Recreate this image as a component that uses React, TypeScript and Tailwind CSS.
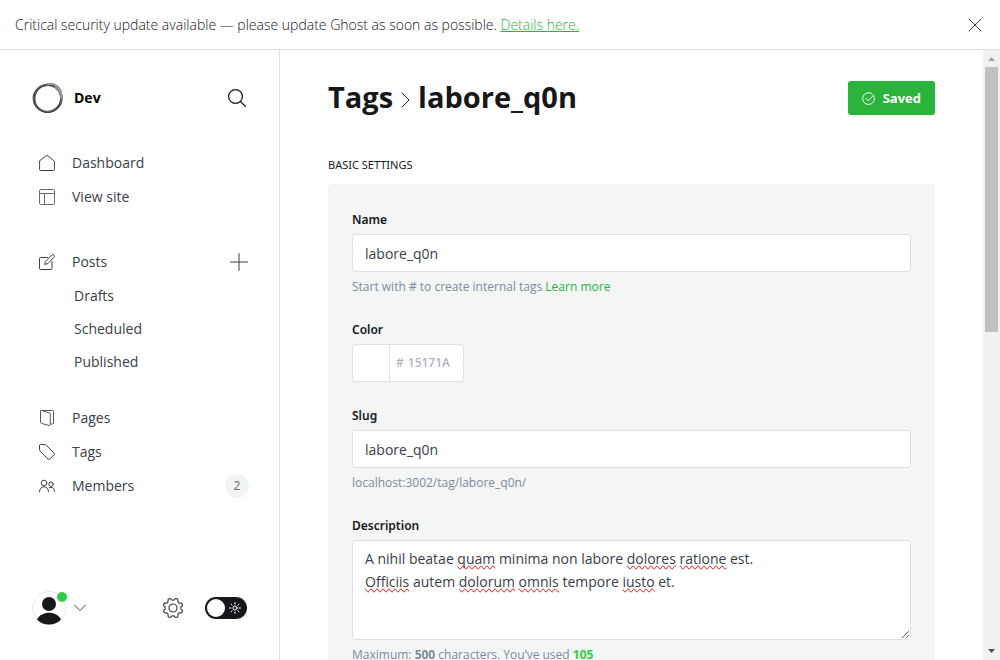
import { useState, type ReactNode } from 'react';

const line = {
  fill: 'none',
  stroke: 'currentColor',
  strokeLinecap: 'round' as const,
  strokeLinejoin: 'round' as const,
  'aria-hidden': true,
};

function LogoIcon() {
  return (
    <svg viewBox="0 0 32 32" className="size-8 shrink-0" fill="none" aria-hidden="true">
      <ellipse cx="15.600" cy="16.400" rx="14" ry="13.400" stroke="#444" strokeWidth="2" />
      <ellipse cx="16.200" cy="16" rx="13.400" ry="14" stroke="#555" strokeWidth="1.500" transform="rotate(30 16 16)" />
      <ellipse cx="16" cy="15.800" rx="14.800" ry="13" stroke="#777" strokeWidth="1.100" transform="rotate(-42 16 16)" />
      <ellipse cx="15.800" cy="16.800" rx="13" ry="13.600" stroke="#444" strokeWidth="1.200" transform="rotate(18 16 16)" />
      <path d="M15 2.400c5-1.600 11 .6 13.200 5.600M23 4.200c4.200 2.600 6.800 7.200 6.400 12.800" stroke="#999" strokeWidth="2.200" />
    </svg>
  );
}

function SearchIcon() {
  return (
    <svg viewBox="0 0 20 20" className="size-5" {...line} strokeWidth="1.3">
      <circle cx="8.500" cy="8.500" r="6.900" />
      <path d="M13.500 13.500 18.600 18.600" />
    </svg>
  );
}

function HomeIcon() {
  return (
    <svg viewBox="0 0 16 16" className="size-4" {...line}>
      <path d="M.6 6.200v8.300a1 1 0 0 0 1 1h12.800a1 1 0 0 0 1-1V6.200L9 .9a1.600 1.600 0 0 0-2 0z" />
    </svg>
  );
}

function LayoutIcon() {
  return (
    <svg viewBox="0 0 16 16" className="size-4 text-[#626d79]" {...line}>
      <rect x=".5" y=".5" width="15" height="15" rx="1.200" />
      <path d="M.5 4.500h15M5.500 4.500v11" />
    </svg>
  );
}

function PostsIcon() {
  return (
    <svg viewBox="0 0 16 16" className="size-4" {...line}>
      <path d="M8.500 3.500H1.500a1 1 0 0 0-1 1v10a1 1 0 0 0 1 1h10.500a1 1 0 0 0 1-1V7.500" />
      <path d="m8.600 9.700-2.900.7.700-2.900L12.900.9a1.400 1.400 0 0 1 2 0l.2.200a1.400 1.400 0 0 1 0 2z" />
    </svg>
  );
}

function PagesIcon() {
  return (
    <svg viewBox="0 0 16 16" className="size-4 text-[#4f5a65]" {...line}>
      <path d="M2.500.5h11a1 1 0 0 1 1 1v11.500a1 1 0 0 1-1 1h-2" />
      <path d="M1.500 1.200v11.200a1 1 0 0 0 .7.900l7.400 2.100a1.200 1.200 0 0 0 1.700-1V4a1 1 0 0 0-.7-1L2.500.5a.8.8 0 0 0-1 .7z" />
    </svg>
  );
}

function TagIcon() {
  return (
    <svg viewBox="0 0 16 16" className="size-4" {...line}>
      <path d="M.5 1.500v4.200a2 2 0 0 0 .6 1.400l8 8a1.200 1.200 0 0 0 1.700 0l4.300-4.300a1.200 1.200 0 0 0 0-1.700l-8-8A2 2 0 0 0 5.700.5H1.500a1 1 0 0 0-1 1z" />
    </svg>
  );
}

function MembersIcon() {
  return (
    <svg viewBox="0 0 16 16" className="size-4" {...line}>
      <circle cx="5" cy="5" r="2.800" />
      <path d="M.5 13.800c0-3.200 2-5 4.500-5s4.500 1.800 4.500 5" />
      <circle cx="12" cy="6.200" r="2.200" />
      <path d="M10.300 9.700c.5-.3 1.100-.4 1.700-.4 2 0 3.500 1.600 3.500 4.200" />
    </svg>
  );
}

// Outline of an eight-toothed cog, with a valley on each axis.
const gearPath =
  Array.from({ length: 144 }, (_, i) => {
    const angle = (i / 144) * Math.PI * 2;
    const radius = 8.9 - 1.2 * Math.tanh(1.6 * Math.cos(8 * angle));
    const x = (11 + radius * Math.cos(angle)).toFixed(2);
    const y = (11 + radius * Math.sin(angle)).toFixed(2);
    return `${i ? 'L' : 'M'}${x} ${y}`;
  }).join('') + 'Z';

function GearIcon() {
  return (
    <svg viewBox="0 0 22 22" className="size-[22px]" {...line} strokeWidth="1.200">
      <circle cx="11" cy="11" r="4" />
      <path d={gearPath} />
    </svg>
  );
}

function AvatarIcon() {
  return (
    <svg viewBox="0 0 34 34" className="size-[34px]" aria-hidden="true">
      <circle cx="17" cy="17" r="16.500" fill="#fff" stroke="#e5e9ed" />
      <circle cx="17" cy="13" r="7" fill="#15171a" />
      <path d="M5 28.400c2.500-4.300 7-6.600 12-6.600s9.500 2.300 12 6.600c-3 3.300-7.200 5.100-12 5.100s-9-1.800-12-5.100z" fill="#15171a" />
    </svg>
  );
}

function SunIcon() {
  return (
    <svg viewBox="0 0 12 12" className="size-3 text-white" {...line} strokeWidth="1">
      <circle cx="6" cy="6" r="2" />
      <path d="M6 .5v1.600M6 9.900v1.600M.5 6h1.600M9.900 6h1.600M2.100 2.100l1.100 1.100M8.800 8.800l1.100 1.100M2.100 9.900l1.100-1.100M8.800 3.200l1.100-1.100" />
    </svg>
  );
}

function NavItem({ icon, label, children }: { icon: ReactNode; label: string; children?: ReactNode }) {
  return (
    <li className="flex h-[34px] items-center">
      <a href="#" className="flex flex-1 items-center gap-[17px] text-[#394047]">
        {icon}
        <span className="pb-[2px]">{label}</span>
      </a>
      {children}
    </li>
  );
}

function Sidebar() {
  const [night, setNight] = useState(false);
  return (
    <aside className="flex w-[280px] shrink-0 flex-col border-r border-[#dddfe1] pt-8 pr-[30px] pb-[35px] pl-8 text-[14px]">
      <div className="flex h-8 items-center justify-between pr-[2px]">
        <a href="#" className="flex items-center gap-[10px] font-bold text-black">
          <LogoIcon />
          <span className="pb-[2px]">Dev</span>
        </a>
        <button type="button" aria-label="Search" className="text-[#15171a]">
          <SearchIcon />
        </button>
      </div>
      <nav className="mt-8 flex flex-col pl-[7px]">
        <ul>
          <NavItem icon={<HomeIcon />} label="Dashboard" />
          <NavItem icon={<LayoutIcon />} label="View site" />
        </ul>
        <ul className="mt-[31px]">
          <NavItem icon={<PostsIcon />} label="Posts">
            <button type="button" aria-label="New post" className="pr-px text-[#394047]">
              <svg viewBox="0 0 18 18" className="size-[18px]" {...line}>
                <path d="M9 .5v17M.5 9h17" />
              </svg>
            </button>
          </NavItem>
          {['Drafts', 'Scheduled', 'Published'].map((label) => (
            <li key={label} className="flex h-[33px] items-center">
              <a href="#" className="pl-[35px] text-[#394047]">
                {label}
              </a>
            </li>
          ))}
        </ul>
        <ul className="mt-[23px]">
          <NavItem icon={<PagesIcon />} label="Pages" />
          <NavItem icon={<TagIcon />} label="Tags" />
          <NavItem icon={<MembersIcon />} label="Members">
            <span className="flex size-6 items-center justify-center rounded-full bg-[#f1f3f4] text-xs font-medium text-[#626d79]">
              2
            </span>
          </NavItem>
        </ul>
      </nav>
      <div className="mt-auto flex items-center pr-[2px]">
        <button type="button" aria-label="Account menu" className="flex items-center gap-2 text-[#394047]">
          <span className="relative">
            <AvatarIcon />
            <span className="absolute top-px right-[-1px] size-[10px] rounded-full bg-[#30cf43]" />
          </span>
          <svg viewBox="0 0 12 8" className="h-2 w-3" {...line}>
            <path d="M.5 1 6 6.500 11.500 1" />
          </svg>
        </button>
        <a href="#" aria-label="Settings" className="ml-auto text-[#394047]">
          <GearIcon />
        </a>
        <button
          type="button"
          role="switch"
          aria-label="Night shift"
          aria-checked={night}
          onClick={() => setNight(!night)}
          className="ml-[21px] flex h-[22px] w-[42px] items-center justify-between rounded-full bg-[#15171a] pr-[6px] pl-[2px]"
        >
          <span className="size-[18px] rounded-full bg-white" />
          <SunIcon />
        </button>
      </div>
    </aside>
  );
}

const labelClass = "block h-[19px] font-['Noto_Sans',sans-serif] text-[12px] leading-[18px] font-semibold text-[#15171a]";
const boxClass = 'rounded-[3px] border border-[#dddfe1] bg-white';
const helpClass = 'mt-[5px] text-[12px] leading-5 text-[#7c8b9a]';

const description = [
  ['A', 'nihil', 'beatae', '*quam', 'minima', 'non', 'labore', '*dolores', '*ratione', 'est.'],
  ['*Officiis', 'autem', '*dolorum', '*omnis', 'tempore', '*iusto', 'et.'],
];
const descriptionText = description.map((row) => row.join(' ').replaceAll('*', '')).join('\n');

function Settings() {
  const [name, setName] = useState('labore_q0n');
  const [slug, setSlug] = useState('labore_q0n');
  const [text, setText] = useState(descriptionText);
  const textBox = 'col-start-1 row-start-1 h-[100px] w-full px-3 py-[6px] text-[14px] leading-[23px]';
  return (
    <form className="rounded-[3px] bg-[#f4f6f6] px-6 pt-[27px] pb-6">
      <label htmlFor="name" className={labelClass}>Name</label>
      <input
        id="name"
        value={name}
        onChange={(e) => setName(e.target.value)}
        className={`${boxClass} mt-1 block h-[38px] w-full px-3 text-[14px] text-[#394047]`}
      />
      <p className={helpClass}>
        Start with # to create internal tags <a href="#" className="text-[#2ab43b]">Learn more</a>
      </p>

      <label htmlFor="color" className={`${labelClass} mt-6`}>Color</label>
      <div className={`${boxClass} mt-1 flex h-[38px] w-28 items-center`}>
        <button type="button" aria-label="Pick a color" className="h-full w-[37px] shrink-0 border-r border-[#dddfe1]" />
        <label htmlFor="color" className="pl-[6px] text-[12px] font-semibold text-[#aeb7c1]">#</label>
        <input
          id="color"
          placeholder="15171A"
          className="w-full min-w-0 pl-1 text-[12px] font-semibold text-[#394047] placeholder:text-[#aeb7c1]"
        />
      </div>

      <label htmlFor="slug" className={`${labelClass} mt-[25px]`}>Slug</label>
      <input
        id="slug"
        value={slug}
        onChange={(e) => setSlug(e.target.value)}
        className={`${boxClass} mt-1 block h-[38px] w-full px-3 text-[14px] text-[#394047]`}
      />
      <p className={helpClass}>localhost:3002/tag/{slug}/</p>

      <label htmlFor="description" className={`${labelClass} mt-6`}>Description</label>
      <div className="mt-1 grid">
        <div aria-hidden="true" className={`${textBox} overflow-hidden rounded-[3px] border border-transparent bg-white text-transparent`}>
          {text === descriptionText &&
            description.map((row, i) => (
              <div key={i}>
                {row.map((word, j) => (
                  <span key={j}>
                    {j > 0 && ' '}
                    {word.startsWith('*') ? (
                      <span className="[text-decoration-line:spelling-error]">{word.slice(1)}</span>
                    ) : (
                      word
                    )}
                  </span>
                ))}
              </div>
            ))}
        </div>
        <textarea
          id="description"
          value={text}
          onChange={(e) => setText(e.target.value)}
          className={`${textBox} z-10 resize rounded-[3px] border border-[#dddfe1] bg-transparent text-[#394047]`}
        />
      </div>
      <p className={helpClass}>
        Maximum: <b>500</b> characters. You’ve used <b className="text-[#30cf43]">105</b>
      </p>
    </form>
  );
}

function ScrollRail() {
  return (
    <div aria-hidden="true" className="flex w-[17px] shrink-0 flex-col items-center bg-[#f1f1f1]">
      <svg viewBox="0 0 17 17" className="size-[17px] shrink-0">
        <path d="M5 11h7L8.500 7z" fill="#a3a3a3" />
      </svg>
      <div className="w-full flex-1 px-[2px]">
        <div className="h-[46%] bg-[#c1c1c1]" />
      </div>
      <svg viewBox="0 0 17 17" className="size-[17px] shrink-0">
        <path d="M5 6h7l-3.500 4z" fill="#505050" />
      </svg>
    </div>
  );
}

export default function App() {
  return (
    <div className="flex h-screen flex-col bg-white font-['Open_Sans','Noto_Sans',sans-serif] text-[#394047]">
      <header className="flex h-[50px] shrink-0 items-center justify-between border-b border-[#dddfe1] pr-[18px] pl-[15px] text-[14px]">
        <p className="pb-px font-light text-[#15171a]">
          Critical security update available — please update Ghost as soon as possible.{' '}
          <a href="#" className="text-[#2ab43b] underline">Details here.</a>
        </p>
        <button type="button" aria-label="Close" className="text-[#394047]">
          <svg viewBox="0 0 14 14" className="size-[14px]" {...line}>
            <path d="m1 1 12 12M13 1 1 13" />
          </svg>
        </button>
      </header>
      <div className="flex min-h-0 flex-1">
        <Sidebar />
        <main className="min-w-0 flex-1 overflow-y-auto px-12 pt-[31px] pb-12 [scrollbar-width:none]">
          <div className="flex h-[34px] items-center justify-between">
            <h1 className="flex items-center gap-2 pb-[2px] text-[29px] leading-8 font-bold text-[#15171a]">
              <a href="#">Tags</a>
              <svg viewBox="0 0 9 16" className="mt-[6px] h-4 w-[9px]" {...line}>
                <path d="m1 1 7 7-7 7" />
              </svg>
              <span>labore_q0n</span>
            </h1>
            <button
              type="button"
              className="flex h-[34px] items-center gap-2 rounded-[3px] bg-[#2ab43b] px-[14px] text-[13px] font-bold text-white"
            >
              <svg viewBox="0 0 14 14" className="size-[13px]" {...line}>
                <path d="M13 4.600a6.400 6.400 0 1 1-2-2.600" />
                <path d="m4 6.800 2.600 2.700L12.500 3.400" />
              </svg>
              <span className="pt-px">Saved</span>
            </button>
          </div>
          <h2 className="mt-10 mb-[9px] font-['Noto_Sans',sans-serif] text-[11px] leading-5 text-[#15171a] uppercase">
            Basic settings
          </h2>
          <Settings />
        </main>
        <ScrollRail />
      </div>
    </div>
  );
}
